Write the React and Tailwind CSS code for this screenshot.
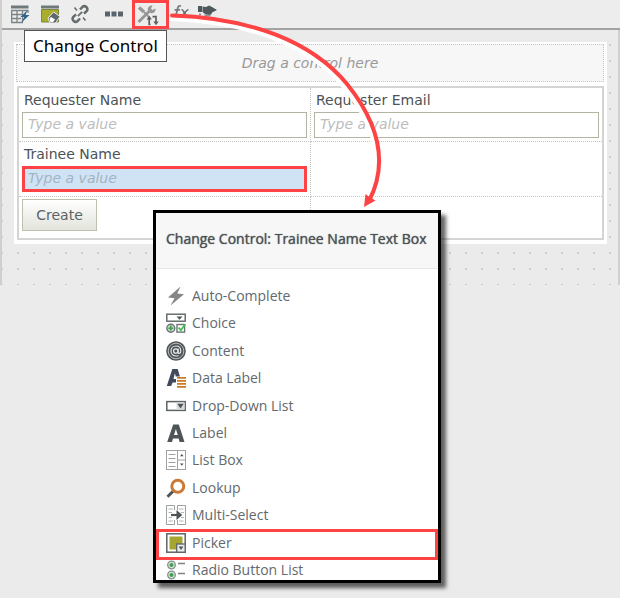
import { useState } from "react";

const ITEMS = [
  { name: "Auto-Complete", icon: BoltIcon },
  { name: "Choice", icon: ChoiceIcon },
  { name: "Content", icon: ContentIcon },
  { name: "Data Label", icon: DataLabelIcon },
  { name: "Drop-Down List", icon: DropDownIcon },
  { name: "Label", icon: LabelIcon },
  { name: "List Box", icon: ListBoxIcon },
  { name: "Lookup", icon: LookupIcon },
  { name: "Multi-Select", icon: MultiSelectIcon },
  { name: "Picker", icon: PickerIcon },
  { name: "Radio Button List", icon: RadioListIcon },
];

function Icon({ children }) {
  return (
    <svg viewBox="0 0 20 20" className="h-5 w-5 shrink-0" fill="none" aria-hidden="true">
      {children}
    </svg>
  );
}

/* ---- control icons ---- */

function BoltIcon() {
  return (
    <Icon>
      <path d="M14.5 0.5 2 11.5l6.5 0.8L4.5 19.5 18 8.2l-6.7-0.8z" fill="#868686" />
    </Icon>
  );
}

function ChoiceIcon() {
  return (
    <Icon>
      <rect x="0.8" y="1.2" width="18.4" height="7" fill="#fff" stroke="#5c6466" strokeWidth="1.4" />
      <path d="M10.5 3.5h6l-3 3.3z" fill="#4d5557" />
      <circle cx="4.8" cy="15.2" r="4" fill="#c9d3cb" stroke="#6b7375" strokeWidth="1.4" />
      <path d="M4.8 12.8v4.8M2.4 15.2h4.8" stroke="#3fa04e" strokeWidth="1.6" />
      <rect x="11" y="11.5" width="7.6" height="7.6" fill="#fff" stroke="#6b7375" strokeWidth="1.4" />
      <path d="M12.6 14.5l2.2 2.7 4.4-6" stroke="#3fc04e" strokeWidth="1.8" />
    </Icon>
  );
}

function ContentIcon() {
  return (
    <Icon>
      <circle cx="10" cy="10" r="9.8" fill="#4d5557" />
      <circle cx="10" cy="10" r="7.8" stroke="#b9bebf" strokeWidth="1" />
      <circle cx="9.8" cy="10" r="2.2" stroke="#e4e6e6" strokeWidth="1.3" />
      <path
        d="M12.2 7.4v3.8c0 1.8 2.6 1.6 2.6-1.2 0-3-2-5-4.8-5s-5 2.1-5 5 2.2 5 5 5c1 0 1.8-.2 2.5-.6"
        stroke="#e4e6e6"
        strokeWidth="1.2"
      />
    </Icon>
  );
}

function DataLabelIcon() {
  return (
    <Icon>
      <path
        d="M6.3 1h5.4l5 17h-4.6l-.9-3.5H6.6L5.2 18H.8zM8.9 5.2 7.5 11h3z"
        fill="#414a5c"
        fillRule="evenodd"
      />
      <rect x="10" y="8.5" width="10" height="11.5" fill="#fff" />
      <path d="M11 9.8h9M11 12.8h9M11 15.8h9M11 18.8h9" stroke="#cb7a25" strokeWidth="1.8" />
    </Icon>
  );
}

function DropDownIcon() {
  return (
    <Icon>
      <rect x="0.8" y="5.6" width="18.4" height="8.8" fill="#fff" stroke="#5c6466" strokeWidth="1.5" />
      <rect x="10.5" y="6.5" width="8" height="7" fill="#d9dbdb" />
      <path d="M11.3 7.8h6.4l-3.2 4.7z" fill="#4d5557" />
    </Icon>
  );
}

function LabelIcon() {
  return (
    <Icon>
      <path
        d="M7.2 1.5h5.6L18.5 19h-4.9l-1-3.6H7L6 19H1.2zM9.9 6 8 12h3.8z"
        fill="#4d5557"
        fillRule="evenodd"
      />
    </Icon>
  );
}

function ListBoxIcon() {
  return (
    <Icon>
      <rect x="0.5" y="0.5" width="19" height="19" fill="#fff" stroke="#9da1a2" />
      <path d="M11.5 1v18M12 10h7.5M2.5 4.5h7M2.5 8.5h7M2.5 12.5h7M2.5 16.5h7" stroke="#9da1a2" />
      <path d="M14 6.3h3.6L15.8 4zM14 13.5h3.6l-1.8 2.3z" fill="#4d5557" />
    </Icon>
  );
}

function LookupIcon() {
  return (
    <Icon>
      <path d="M7 13.2 1.5 18.8" stroke="#4d5557" strokeWidth="3" />
      <circle cx="11.8" cy="8.2" r="6" fill="#fff" stroke="#cb7a35" strokeWidth="3" />
    </Icon>
  );
}

function MultiSelectIcon() {
  return (
    <Icon>
      <path d="M8.5 5V.5h-8v19h8V15M11.5 5V.5h8v19h-8V15" stroke="#9da1a2" />
      <path
        d="M2.5 4H7M2.5 7.5H6M2.5 12.5H6M2.5 16H7M13 4h4.5M15 7.5h3M15 12.5h3M13 16h4.5"
        stroke="#b2b5b6"
      />
      <path d="M5 10h7" stroke="#4d5557" strokeWidth="2.2" />
      <path d="M10.5 5v10L16.3 10z" fill="#4d5557" />
    </Icon>
  );
}

function PickerIcon() {
  return (
    <Icon>
      <rect x="0.8" y="0.8" width="18.4" height="18.4" fill="#fff" stroke="#5c6466" strokeWidth="1.5" />
      <rect x="3.5" y="3.5" width="13" height="13" fill="#a5a530" />
      <rect x="10.7" y="11" width="8.5" height="8.2" fill="#e9ebeb" stroke="#5c6466" strokeWidth="1.3" />
      <path d="M12.6 13.5h4.8L15 17z" fill="#4d5557" />
    </Icon>
  );
}

function RadioListIcon() {
  return (
    <Icon>
      <circle cx="5.5" cy="5" r="3.8" fill="#d5e5d6" stroke="#868d8f" strokeWidth="1.3" />
      <circle cx="5.5" cy="5" r="2" fill="#3fa050" />
      <circle cx="5.5" cy="15" r="3.8" fill="#d5e5d6" stroke="#868d8f" strokeWidth="1.3" />
      <circle cx="5.5" cy="15" r="2" fill="#3fa050" />
      <path d="M12 3.5h7M12 13.5h7" stroke="#7b8385" strokeWidth="1.5" />
    </Icon>
  );
}

/* ---- toolbar icons ---- */

function TableBoltIcon() {
  return (
    <Icon>
      <path d="M1 1.5h17.5v3H1z" fill="#6f787b" />
      <path
        d="M1.7 6v12.5H13M18 6v3M1 6.5h17.5M1 10.5h11M1 14.5h10M7 6v12.5M12.5 6v12.5"
        stroke="#7b8487"
        strokeWidth="1.3"
      />
      <path d="M17.5 6 10.5 13h3.7l-2.7 5.5 8-7.5h-4z" fill="#2f6486" />
    </Icon>
  );
}

function PageEraserIcon() {
  return (
    <Icon>
      <path d="M1 1.5h18v3H1z" fill="#6f787b" />
      <path d="M1.5 5.5h17V18h-17z" fill="#a9ad2c" stroke="#7f8440" />
      <path d="M8 14 13.5 8l6.5 4.5-4.5 6.5H10z" fill="#5f686b" stroke="#ededed" />
      <path d="m9.5 14.5 1.5-1.5 4 2.5-2 2.5h-2.5z" fill="#fff" />
    </Icon>
  );
}

function UnlinkIcon() {
  return (
    <Icon>
      <g stroke="#666c6e" strokeWidth="2.5">
        <path d="m10 5.5 2.5-2.7c2.5-2 6.3 1.2 4.3 4.2L14 9.7" />
        <path d="m10 14.5-2.5 2.7c-2.5 2-6.3-1.2-4.3-4.2L6 10.3" />
        <path d="m7.8 12.2 4.4-4.4" strokeWidth="1.8" />
        <path d="M4.5 3.5 7 6.5M13 13.5l2.5 3" strokeWidth="1.6" />
      </g>
    </Icon>
  );
}

function DotsIcon() {
  return (
    <Icon>
      <path d="M1 7.5h5v5H1zM7.5 7.5h5v5h-5zM14 7.5h5v5h-5z" fill="#5a646c" />
    </Icon>
  );
}

function ToolsIcon() {
  return (
    <svg viewBox="0 0 22 22" className="h-[22px] w-[22px]" fill="none" aria-hidden="true">
      <path d="M2 3.5 7 8" stroke="#979797" strokeWidth="3.4" />
      <path d="m7 8 5 5" stroke="#979797" strokeWidth="1.8" />
      <path d="M1.5 18 12.5 7" stroke="#979797" strokeWidth="3" />
      <path d="M18.5 4.5 15.5 6 14 4.5l1.5-3c-3-.5-5.5 2-4.5 5L13.5 9c3 1 5.5-1.5 5-4.5z" fill="#979797" />
      <path d="M13.5 20.5h-1.3V13M15.5 12.7H19v7" stroke="#5f5f5f" strokeWidth="1.7" />
      <path d="M9.5 15.5h5.4l-2.7-3.7zM16.3 17.5h5.4L19 21.2z" fill="#5f5f5f" />
    </svg>
  );
}

function FxIcon() {
  return (
    <Icon>
      <path
        d="M10 2c-2.5-.8-3 .8-3.5 3L5 11c-.5 2.5-2 3-3.500 2.200M3.500 5.800H9"
        stroke="#777d7f"
        strokeWidth="1.8"
      />
      <path
        d="M10.5 5.8c2.500-1 2.500 6 6 5.500M17.500 5.800C15 5.300 13.500 11.500 10.500 11.300"
        stroke="#666c6e"
        strokeWidth="1.6"
      />
    </Icon>
  );
}

function HandIcon() {
  return (
    <Icon>
      <path d="M1 2h4v6H1z" fill="#4d585d" />
      <path d="M5.5 2.5 9 3l3-1.5 3 1.5 5 3-5 2.5c-.5 2.5-2 2.5-3.5 2.5S7.5 10 5.5 8z" fill="#4d585d" />
      <path d="M2 9.5h2v2H2zM6.5 10.5h7v2h-5z" fill="#8b9295" />
    </Icon>
  );
}

function ToolButton({ label, children }) {
  return (
    <button type="button" aria-label={label} className="flex h-7 w-5 items-center justify-center">
      {children}
    </button>
  );
}

function Field({ id, label, selected }) {
  const [value, setValue] = useState("");

  return (
    <div className="flex flex-col">
      <label htmlFor={id} className="pl-0.5 text-[14px] leading-6 text-[#4c5356]">
        {label}
      </label>
      <input
        id={id}
        type="text"
        placeholder="Type a value"
        value={value}
        onChange={(e) => setValue(e.target.value)}
        className={`h-[26px] w-full pb-0.5 text-[14px] italic outline-none ${
          selected
            ? "border-[3px] border-[#fd4343] bg-[#d0e3f4] px-[3px] placeholder:text-[#a3b4c6]"
            : "border border-[#b3b5a2] bg-white px-[5px] placeholder:text-[#bdbdbd]"
        }`}
      />
    </div>
  );
}

function Toolbar() {
  return (
    <div className="relative flex h-[30px] items-start gap-2.5 border-b-2 border-[#a3a3a3] bg-[#ededed] pl-2">
      <ToolButton label="Quick table"><TableBoltIcon /></ToolButton>
      <ToolButton label="Clear page"><PageEraserIcon /></ToolButton>
      <ToolButton label="Unbind"><UnlinkIcon /></ToolButton>
      <div className="ml-1 flex">
        <ToolButton label="More"><DotsIcon /></ToolButton>
      </div>
      <button
        type="button"
        aria-label="Change Control"
        className="-ml-0.5 flex h-[29px] w-[37px] items-center border-[3px] border-[#fd4343] pl-0.5"
      >
        <ToolsIcon />
      </button>
      <div className="-ml-2 flex gap-1.5">
        <ToolButton label="Expression"><FxIcon /></ToolButton>
        <ToolButton label="Conditions"><HandIcon /></ToolButton>
      </div>
      <div
        role="tooltip"
        className="absolute left-[22px] top-[30px] z-10 border border-[#555] bg-white px-2 py-0.5 font-['Noto_Sans',sans-serif] text-[17px] leading-[26px] text-black"
      >
        Change Control
      </div>
    </div>
  );
}

function Designer() {
  return (
    <div className="border-l-2 border-[#cfcfcf] font-['DejaVu_Sans',sans-serif]">
      <Toolbar />
      <div className="border-r-2 border-[#cfcfcf] bg-[#ebebeb] bg-[radial-gradient(circle,#cfcfcf_1px,transparent_1px)] bg-size-[16px_16px] bg-position-[8px_7px] pb-[41px] pl-3 pr-[11px] pt-3">
        <div className="bg-white p-0.5 pr-[3px] pb-1">
          <div className="flex h-[38px] items-center justify-center border border-dotted border-[#c4c4c4] bg-[#f7f7f7] text-[14px] italic text-[#999]">
            Drag a control here
          </div>
          <table className="ml-px mt-1 w-[calc(100%-1px)] table-fixed border-collapse border-2 border-[#d4d4d4]">
            <tbody>
              <tr className="h-[54px] align-top">
                <td className="border border-dotted border-[#c4c4c4] px-[3px]">
                  <Field id="requester-name" label="Requester Name" />
                </td>
                <td className="border border-dotted border-[#c4c4c4] px-[3px]">
                  <Field id="requester-email" label="Requester Email" />
                </td>
              </tr>
              <tr className="h-[55px] align-top">
                <td className="border border-dotted border-[#c4c4c4] px-[3px]">
                  <Field id="trainee-name" label="Trainee Name" selected />
                </td>
                <td className="border border-dotted border-[#c4c4c4]" />
              </tr>
              <tr className="h-[43px] align-top">
                <td className="border border-dotted border-[#c4c4c4] px-[3px] pt-0.5">
                  <button
                    type="button"
                    className="block h-8 w-[75px] border border-[#bfc1ae] bg-linear-to-b from-white to-[#e2e4dc] pt-0.5 text-[14px] text-[#5b6365]"
                  >
                    Create
                  </button>
                </td>
                <td className="border border-dotted border-[#c4c4c4]" />
              </tr>
            </tbody>
          </table>
        </div>
      </div>
    </div>
  );
}

function ChangeControlDialog() {
  return (
    <div
      role="dialog"
      aria-labelledby="dialog-title"
      className="absolute left-[153px] top-[210px] h-[373px] w-72 overflow-hidden border-[3px] border-black bg-white shadow-[5px_5px_4px_rgba(0,0,0,0.6)]"
    >
      <h2
        id="dialog-title"
        className="flex h-14 items-center whitespace-nowrap border-b border-[#e6e6e6] bg-[#f7f7f7] pb-1 pl-2.5 text-[14px] text-[#4d5154] text-shadow-[0_0_1px_#4d5154]"
      >
        Change Control: Trainee Name Text Box
      </h2>
      <ul className="mt-[13px] grid h-[302px] auto-rows-fr">
        {ITEMS.map(({ name, icon: ItemIcon }) => (
          <li key={name} className="relative">
            <button
              type="button"
              className="flex h-full w-full items-center gap-1.5 pl-2.5 text-left text-[14px] leading-5 text-[#63696d]"
            >
              <ItemIcon />
              {name}
            </button>
            {name === "Picker" && (
              <span className="pointer-events-none absolute inset-x-0 top-0 h-[31px] border-[3px] border-[#fd4343]" />
            )}
          </li>
        ))}
      </ul>
    </div>
  );
}

function Arrow() {
  return (
    <svg
      viewBox="0 0 240 215"
      className="pointer-events-none absolute left-40 top-0 z-20 h-[215px] w-60"
      fill="none"
      aria-hidden="true"
    >
      <path d="M10 17.5C90 20 150 44 185 86C222 132 224 168 209 200" stroke="#fff" strokeWidth="7" />
      <path
        d="M12 15.5C92 18 152 42 187 84C224 130 226 168 209 201"
        stroke="#fd4343"
        strokeWidth="4"
        strokeLinecap="round"
      />
      <path d="M204 207l1.5-13 4 3 6 3.5z" fill="#fd4343" />
    </svg>
  );
}

export default function App() {
  return (
    <div className="relative min-h-screen overflow-hidden bg-[#ebebeb] font-['Open_Sans',sans-serif]">
      <Designer />
      <Arrow />
      <ChangeControlDialog />
    </div>
  );
}
